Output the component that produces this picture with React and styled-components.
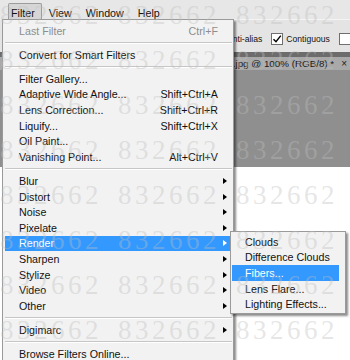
import React from 'react';
import styled, { createGlobalStyle } from 'styled-components';

const GlobalStyle = createGlobalStyle`
  html, body { margin: 0; padding: 0; background: #fff; }
  body { font-family: "Liberation Sans", Arial, sans-serif; color: #111; }
`;

const Screen = styled.div`
  position: relative;
  width: 350px;
  height: 360px;
  overflow: hidden;
  display: flex;
  flex-direction: column;
  background: #fff;
  font-size: 10.7px;
`;

/* ---------- top menu bar ---------- */
const MenuBar = styled.div`
  flex: none;
  height: 20px;
  box-sizing: border-box;
  padding: 3px 0 0 8px;
  display: flex;
  align-items: stretch;
  gap: 4px;
  background: #e7e7e7;
  border-bottom: 1px solid #f4f4f4;
`;

const MenuTitle = styled.div`
  display: flex;
  align-items: center;
  padding: 2px 6px 0 2px;
  border: 1px solid ${p => (p.$open ? '#9c9c9c' : 'transparent')};
  border-bottom: none;
  border-radius: 2px 2px 0 0;
  background: ${p => (p.$open ? '#d6d6d6' : 'transparent')};
`;

/* ---------- options bar ---------- */
const OptionsBar = styled.div`
  flex: none;
  height: 32px;
  box-sizing: border-box;
  padding: 6px 0 0 212px;
  display: flex;
  align-items: center;
  gap: 9px;
  background: #e4e4e4;
  font-size: 8.6px;
  white-space: nowrap;
`;

const CheckGroup = styled.label`
  display: flex;
  align-items: center;
  gap: 3px;
`;

const Box = styled.span`
  width: 12px;
  height: 12px;
  box-sizing: border-box;
  border: 1px solid #6f6f6f;
  background: #fff;
  display: flex;
  align-items: center;
  justify-content: center;
  flex: none;
`;

/* ---------- document tabs ---------- */
const TabStrip = styled.div`
  flex: none;
  height: 18px;
  box-sizing: border-box;
  padding-top: 5px;
  background: #6c6c6c;
  display: flex;
`;

const DocTab = styled.div`
  flex: 1;
  display: flex;
  justify-content: flex-end;
  align-items: center;
  gap: 7px;
  padding-right: 3px;
  background: #a9a9a9;
  font-size: 9.8px;
  color: #1a1a1a;
  white-space: nowrap;
`;

const Close = styled.span`
  font-size: 10px;
  color: #222;
`;

const Pasteboard = styled.div`
  flex: none;
  height: 97px;
  background: #8f8f8f;
`;

const Canvas = styled.div`
  flex: 1;
  background: #ffffff;
`;

/* ---------- menus ---------- */
const Dropdown = styled.div`
  position: absolute;
  left: 2px;
  top: 19px;
  width: 232px;
  box-sizing: border-box;
  border: 1px solid #9a9a9a;
  background: #f2f2f2;
  padding: 3px 0 20px;
  box-shadow: 2px 2px 2px rgba(0, 0, 0, 0.45);
  z-index: 2;
`;

const SubMenu = styled.div`
  position: absolute;
  left: 230px;
  top: 231px;
  width: 116px;
  box-sizing: border-box;
  border: 1px solid #9a9a9a;
  background: #f2f2f2;
  padding: 2px 0 1px;
  box-shadow: 2px 2px 2px rgba(0, 0, 0, 0.45);
  z-index: 3;
`;

const Item = styled.div`
  height: 15.625px;
  display: flex;
  align-items: center;
  margin: ${p => (p.$sub ? '0 6px 0 1px' : '0 3px 0 2px')};
  padding-left: ${p => (p.$sub ? '13px' : '14px')};
  background: ${p => (p.$active ? '#3399ff' : 'transparent')};
  color: ${p => (p.$active ? '#fff' : p.$disabled ? '#8e8e8e' : '#111')};
  white-space: nowrap;
`;

const Label = styled.span`
  flex: 1;
`;

const Shortcut = styled.span`
  flex: none;
`;

const ArrowCell = styled.span`
  flex: none;
  width: 12px;
  box-sizing: border-box;
  padding-left: 5px;
  display: flex;
  align-items: center;
`;

const Arrow = styled.span`
  width: 0;
  height: 0;
  border-left: 4px solid ${p => (p.$active ? '#fff' : '#000')};
  border-top: 3.5px solid transparent;
  border-bottom: 3.5px solid transparent;
`;

const Separator = styled.div`
  margin: 3px 1px 3.4px 2px;
  border-top: 1px solid #c6c6c6;
  border-bottom: 1px solid #ffffff;
`;

/* ---------- watermark ---------- */
const Watermark = styled.div`
  position: absolute;
  inset: 0;
  pointer-events: none;
  z-index: 10;
  display: flex;
  flex-direction: column;
  margin-top: -7.5px;
`;

const WatermarkRow = styled.div`
  height: 45px;
  line-height: 45px;
  display: flex;
  gap: 16px;
  white-space: nowrap;
  font-family: "Liberation Serif", "Times New Roman", serif;
  font-size: 27px;
  letter-spacing: 3.5px;
  color: rgba(190, 190, 190, 0.38);
`;

const mainItems = [
  { label: 'Last Filter', shortcut: 'Ctrl+F', disabled: true },
  'sep',
  { label: 'Convert for Smart Filters' },
  'sep',
  { label: 'Filter Gallery...' },
  { label: 'Adaptive Wide Angle...', shortcut: 'Shift+Ctrl+A' },
  { label: 'Lens Correction...', shortcut: 'Shift+Ctrl+R' },
  { label: 'Liquify...', shortcut: 'Shift+Ctrl+X' },
  { label: 'Oil Paint...' },
  { label: 'Vanishing Point...', shortcut: 'Alt+Ctrl+V' },
  'sep',
  { label: 'Blur', sub: true },
  { label: 'Distort', sub: true },
  { label: 'Noise', sub: true },
  { label: 'Pixelate', sub: true },
  { label: 'Render', sub: true, active: true },
  { label: 'Sharpen', sub: true },
  { label: 'Stylize', sub: true },
  { label: 'Video', sub: true },
  { label: 'Other', sub: true },
  'sep',
  { label: 'Digimarc', sub: true },
  'sep',
  { label: 'Browse Filters Online...' },
];

const renderItems = [
  { label: 'Clouds' },
  { label: 'Difference Clouds' },
  { label: 'Fibers...', active: true },
  { label: 'Lens Flare...' },
  { label: 'Lighting Effects...' },
];

function Check() {
  return (
    <svg width="10" height="10" viewBox="0 0 10 10">
      <path d="M1.5 5.2 L4 7.8 L8.8 1.6" fill="none" stroke="#000" strokeWidth="1.4" />
    </svg>
  );
}

export default function App() {
  return (
    <>
      <GlobalStyle />
      <Screen>
        <MenuBar>
          <MenuTitle $open>Filter</MenuTitle>
          <MenuTitle>View</MenuTitle>
          <MenuTitle>Window</MenuTitle>
          <MenuTitle>Help</MenuTitle>
        </MenuBar>

        <OptionsBar>
          <CheckGroup>
            <Box><Check /></Box>
            Anti-alias
          </CheckGroup>
          <CheckGroup>
            <Box><Check /></Box>
            Contiguous
          </CheckGroup>
          <CheckGroup>
            <Box />
            Sample All Layers
          </CheckGroup>
        </OptionsBar>

        <TabStrip>
          <DocTab>
            <span>image.jpg @ 100% (RGB/8) *</span>
            <Close>×</Close>
          </DocTab>
        </TabStrip>
        <Pasteboard />
        <Canvas />

        <Dropdown>
          {mainItems.map((it, i) =>
            it === 'sep' ? (
              <Separator key={i} />
            ) : (
              <Item key={i} $active={it.active} $disabled={it.disabled}>
                <Label>{it.label}</Label>
                {it.shortcut && <Shortcut>{it.shortcut}</Shortcut>}
                <ArrowCell>{it.sub && <Arrow $active={it.active} />}</ArrowCell>
              </Item>
            )
          )}
        </Dropdown>

        <SubMenu>
          {renderItems.map((it, i) => (
            <Item key={i} $sub $active={it.active}>
              <Label>{it.label}</Label>
            </Item>
          ))}
        </SubMenu>

        <Watermark>
          {Array.from({ length: 9 }).map((_, r) => (
            <WatermarkRow key={r}>
              <span>832662</span>
              <span>832662</span>
              <span>832662</span>
            </WatermarkRow>
          ))}
        </Watermark>
      </Screen>
    </>
  );
}
